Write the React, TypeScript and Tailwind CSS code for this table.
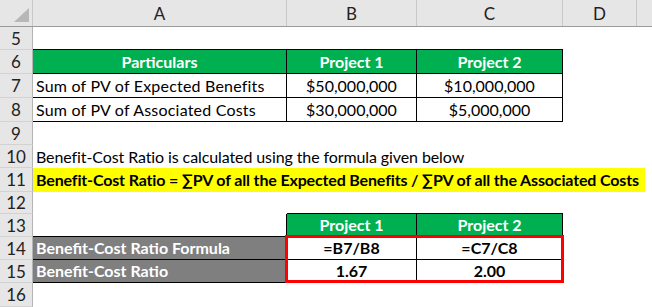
import React from "react";

const font = { fontFamily: "Lato, 'Open Sans', sans-serif" };

const RowNum = ({ n }: { n: number }) => (
  <div className="w-[33px] shrink-0 flex items-center justify-center bg-[#e6e6e6] border-r border-r-[#b4b4b4] border-b border-b-[#d2d2d2] text-[17px] text-[#222]">
    {n}
  </div>
);

export default function App() {
  return (
    <div className="relative w-[652px] h-[307px] overflow-hidden bg-white text-black text-[16px] leading-none" style={font}>
      {/* column header */}
      <div className="flex h-[27px] bg-[#e6e6e6] border-b border-b-[#9b9b9b]">
        <div className="w-[33px] shrink-0 relative border-r border-r-[#c8c8c8]">
          <svg width="33" height="26" className="absolute left-0 top-0">
            <polygon points="14,22 29,22 29,8" fill="#b7b7b7" />
          </svg>
        </div>
        <div className="w-[254px] shrink-0 flex items-center justify-center border-r border-r-[#c8c8c8] text-[17px] text-[#222]">A</div>
        <div className="w-[130px] shrink-0 flex items-center justify-center border-r border-r-[#c8c8c8] text-[17px] text-[#222]">B</div>
        <div className="w-[146px] shrink-0 flex items-center justify-center border-r border-r-[#c8c8c8] text-[17px] text-[#222]">C</div>
        <div className="w-[74px] shrink-0 flex items-center justify-center border-r border-r-[#c8c8c8] text-[17px] text-[#222]">D</div>
        <div className="flex-1" />
      </div>

      {/* row 5 */}
      <div className="flex h-[23px]">
        <RowNum n={5} />
        <div className="w-[530px] shrink-0 border-b border-b-black" />
        <div className="flex-1" />
      </div>

      {/* row 6 */}
      <div className="flex h-[24px]">
        <RowNum n={6} />
        <div className="w-[254px] shrink-0 bg-[#00b050] border-r border-b border-black flex items-center justify-center font-bold text-white">Particulars</div>
        <div className="w-[130px] shrink-0 bg-[#00b050] border-r border-b border-black flex items-center justify-center font-bold text-white">Project 1</div>
        <div className="w-[146px] shrink-0 bg-[#00b050] border-r border-b border-black flex items-center justify-center font-bold text-white">Project 2</div>
        <div className="flex-1" />
      </div>

      {/* row 7 */}
      <div className="flex h-[24px]">
        <RowNum n={7} />
        <div className="w-[254px] shrink-0 border-r border-b border-black flex items-center pl-[3px] tracking-[0.2px]">Sum of PV of Expected Benefits</div>
        <div className="w-[130px] shrink-0 border-r border-b border-black flex items-center justify-center">$50,000,000</div>
        <div className="w-[146px] shrink-0 border-r border-b border-black flex items-center justify-center">$10,000,000</div>
        <div className="flex-1" />
      </div>

      {/* row 8 */}
      <div className="flex h-[24px]">
        <RowNum n={8} />
        <div className="w-[254px] shrink-0 border-r border-b border-black flex items-center pl-[3px] tracking-[0.2px]">Sum of PV of Associated Costs</div>
        <div className="w-[130px] shrink-0 border-r border-b border-black flex items-center justify-center">$30,000,000</div>
        <div className="w-[146px] shrink-0 border-r border-b border-black flex items-center justify-center">$5,000,000</div>
        <div className="flex-1" />
      </div>

      {/* row 9 */}
      <div className="flex h-[23px]">
        <RowNum n={9} />
        <div className="flex-1" />
      </div>

      {/* row 10 */}
      <div className="flex h-[23px]">
        <RowNum n={10} />
        <div className="flex-1 flex items-center pl-[3px] whitespace-nowrap tracking-[-0.1px]">Benefit-Cost Ratio is calculated using the formula given below</div>
      </div>

      {/* row 11 */}
      <div className="flex h-[24px]">
        <RowNum n={11} />
        <div className="w-[612px] shrink-0 bg-[#ffff00] flex items-center pl-[3px] whitespace-nowrap font-bold tracking-[-0.15px]">
          Benefit-Cost Ratio = ∑PV of all the Expected Benefits / ∑PV of all the Associated Costs
        </div>
        <div className="flex-1" />
      </div>

      {/* row 12 */}
      <div className="flex h-[22px]">
        <RowNum n={12} />
        <div className="w-[254px] shrink-0" />
        <div className="w-[276px] shrink-0 border-b border-b-black" />
        <div className="flex-1" />
      </div>

      {/* row 13 */}
      <div className="flex h-[23px]">
        <RowNum n={13} />
        <div className="w-[253px] shrink-0 border-b border-b-black" />
        <div className="w-[131px] shrink-0 bg-[#00b050] border-l border-r border-b border-black flex items-center justify-center font-bold text-white">Project 1</div>
        <div className="w-[146px] shrink-0 bg-[#00b050] border-r border-b border-black flex items-center justify-center font-bold text-white">Project 2</div>
        <div className="flex-1" />
      </div>

      {/* row 14 */}
      <div className="flex h-[23px]">
        <RowNum n={14} />
        <div className="w-[254px] shrink-0 bg-[#7f7f7f] border-r border-b border-black flex items-center pl-[3px] font-bold text-white">Benefit-Cost Ratio Formula</div>
        <div className="w-[130px] shrink-0 border-r border-b border-black flex items-center justify-center font-bold">=B7/B8</div>
        <div className="w-[146px] shrink-0 border-r border-b border-black flex items-center justify-center font-bold">=C7/C8</div>
        <div className="flex-1" />
      </div>

      {/* row 15 */}
      <div className="flex h-[23px]">
        <RowNum n={15} />
        <div className="w-[254px] shrink-0 bg-[#7f7f7f] border-r border-b border-black flex items-center pl-[3px] font-bold text-white">Benefit-Cost Ratio</div>
        <div className="w-[130px] shrink-0 border-r border-b border-black flex items-center justify-center font-bold">1.67</div>
        <div className="w-[146px] shrink-0 border-r border-b border-black flex items-center justify-center font-bold">2.00</div>
        <div className="flex-1" />
      </div>

      {/* row 16 */}
      <div className="flex h-[24px]">
        <RowNum n={16} />
        <div className="flex-1" />
      </div>

      {/* selection-style red outline around B14:C15 */}
      <div className="absolute left-[285px] top-[235px] w-[279px] h-[48px] border-[3px] border-[#ff0000] pointer-events-none" />
    </div>
  );
}
